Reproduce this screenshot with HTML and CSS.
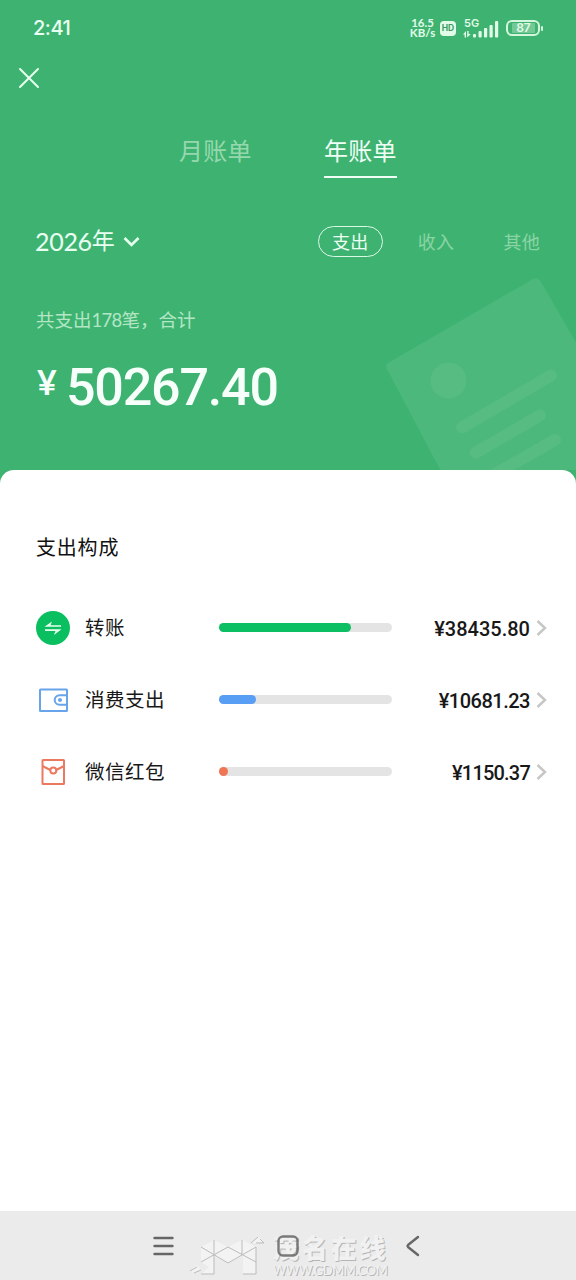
FILE: index.html
```html
<!DOCTYPE html>
<html lang="zh-CN">
<head>
<meta charset="utf-8">
<title>年账单</title>
<link rel="stylesheet" href="styles.css">
</head>
<body>
<div class="screen">
  <header class="hero">
    <svg class="receipt" width="206" height="210" viewBox="370 260 206 210">
      <path d="M388 363 L533 279 Q538 277 541 282 L640 453 L480 545 L387 369 Q385 365 388 363Z" fill="#fff" fill-opacity=".075"/>
      <circle cx="448.500" cy="380.500" r="18" fill="#fff" fill-opacity=".06"/>
      <g stroke="#fff" stroke-opacity=".06" stroke-width="12" stroke-linecap="round">
        <path d="M462 427.500 L551 375.500"/><path d="M476 452.500 L540 415.500"/><path d="M472 487 L555 440"/>
      </g>
    </svg>
    <div class="status">
      <span class="clock">2:41</span>
      <div class="status-icons">
        <div class="speed"><span>16.5</span><span>KB/s</span></div>
        <span class="hd">HD</span>
        <div class="signal">
          <span class="net">5G</span>
          <svg width="36" height="19" viewBox="0 0 36 19" fill="#e2fbe9">
            <path d="M0 15.500 L3 12 V18.500 H1.600 V15.500Z M4.200 12 H5.600 V15 H7.800 L4.200 18.500Z"/>
            <rect x="10" y="15" width="3" height="3.500" rx="1"/><rect x="15.500" y="12" width="3.200" height="6.500" rx="1"/><rect x="21" y="9" width="3.200" height="9.500" rx="1"/><rect x="26.500" y="6" width="3.200" height="12.500" rx="1"/><rect x="32" y="2" width="3.200" height="16.500" rx="1"/>
          </svg>
        </div>
        <div class="battery"><span class="level">87</span></div>
        <span class="battery-tip"></span>
      </div>
    </div>
    <div class="nav">
      <svg width="22" height="22" viewBox="0 0 22 22" fill="none" stroke="#e8fff0" stroke-width="2" stroke-linecap="round"><path d="M2 2 L20 20 M20 2 L2 20"/></svg>
    </div>
    <div class="tabs"><span class="tab">月账单</span><span class="tab active">年账单</span></div>
    <div class="filters">
      <div class="year"><span class="year-num">2026</span><span class="year-unit">年</span>
        <svg width="17" height="12" viewBox="0 0 17 12" fill="none" stroke="#e8fff0" stroke-width="2.600"><path d="M1.500 2 L8.500 9 L15.500 2"/></svg>
      </div>
      <div class="kinds"><span class="kind chosen">支出</span><span class="kind">收入</span><span class="kind">其他</span></div>
    </div>
    <p class="summary">共支出<span class="count">178</span>笔，合计</p>
    <div class="total"><span class="yen">¥</span><span class="sum">50267.40</span></div>
  </header>
  <main class="card">
    <h2 class="title">支出构成</h2>
    <div class="row">
      <div class="icon"><svg width="36" height="36" viewBox="0 0 36 36"><circle cx="18" cy="18" r="17" fill="#0abf60"/><path d="M9.500 16.800 L17 11.500 L15.500 15.200 H26 V16.800Z M26.500 19.300 H10 V21 H20.500 L19 25Z" fill="#e8fff0"/></svg></div>
      <span class="name">转账</span>
      <div class="bar"><div class="fill green" style="width:132.500px"></div></div>
      <span class="amount">¥38435.80</span>
      <svg class="chevron" width="11" height="18" viewBox="0 0 11 18"><path d="M1.500 2 L9 9 L1.500 16"/></svg>
    </div>
    <div class="row">
      <div class="icon"><svg width="36" height="36" viewBox="0 0 36 36" fill="none" stroke="#67a4e9" stroke-width="2"><rect x="5" y="7.500" width="27" height="21.500" rx=".5"/><path d="M32 13.200 H24.500 A4.700 4.700 0 0 0 24.500 22.800 H32"/><circle cx="25" cy="18" r="2" fill="#67a4e9" stroke="none"/></svg></div>
      <span class="name">消费支出</span>
      <div class="bar"><div class="fill blue" style="width:37px"></div></div>
      <span class="amount medium">¥10681.23</span>
      <svg class="chevron" width="11" height="18" viewBox="0 0 11 18"><path d="M1.500 2 L9 9 L1.500 16"/></svg>
    </div>
    <div class="row">
      <div class="icon"><svg width="36" height="36" viewBox="0 0 36 36" fill="none" stroke="#eb7960" stroke-width="2"><rect x="7.500" y="6" width="21.500" height="24" rx=".5"/><path d="M7.500 12 L15.300 16 M21.200 16 L29 12"/><circle cx="18.300" cy="16.500" r="3"/></svg></div>
      <span class="name">微信红包</span>
      <div class="bar"><div class="fill orange" style="width:9.500px"></div></div>
      <span class="amount small">¥1150.37</span>
      <svg class="chevron" width="11" height="18" viewBox="0 0 11 18"><path d="M1.500 2 L9 9 L1.500 16"/></svg>
    </div>
  </main>
  <footer class="keys">
    <svg width="21" height="22" viewBox="0 0 21 22" stroke="#666" stroke-width="2.400" stroke-linecap="round"><path d="M1.500 3 H19.500 M1.500 11 H19.500 M1.500 19 H19.500"/></svg>
    <svg class="home" width="22" height="22" viewBox="0 0 22 22" fill="none" stroke="#666" stroke-width="2.400"><rect x="1.500" y="1.500" width="19" height="19" rx="4.500"/></svg>
    <svg width="15" height="22" viewBox="0 0 15 22" fill="none" stroke="#666" stroke-width="2.400" stroke-linecap="round" stroke-linejoin="round"><path d="M13 2 L3 10 Q2 11 3 12 L13 20"/></svg>
    <div class="watermark">
      <svg width="78" height="40" viewBox="0 0 78 40">
        <path d="M11 10 L24 3 L38 10 L52 3 L66 10 V37 H53 V19 L38 26 L24 19 V37 H11 L19 30 L11 25Z" fill="#f4f4f4"/>
        <path d="M61 6 L68 0 L74 4 L67 6Z M0 34 L7 28 L11 33 L4 36Z" fill="#f4f4f4"/>
        <path d="M11 10 L38 26 L66 10 M11 25 L38 10 L66 25 M24 3 V37 H11 M52 3 V18 M66 10 V37 H53 M61 6 L68 0 M66 6 H74 L70 2 M0 34 L7 30 M4 36 L11 33" fill="none" stroke="#b7b7b7" stroke-width="1"/>
      </svg>
      <div class="brand"><span class="brand-name">茂名在线</span><span class="brand-url">WWW.GDMM.COM</span></div>
    </div>
  </footer>
</div>
</body>
</html>
```

FILE: styles.css
```css
* { box-sizing: border-box; }
body { margin: 0; font-family: "Lato", "Noto Sans CJK SC", sans-serif; }
.screen { width: 576px; height: 1280px; display: flex; flex-direction: column; background: #fff; overflow: hidden; }
svg { display: block; flex: none; }
.hero { position: relative; height: 484px; flex: none; background: #3eb371; color: #e9fff1; }
.receipt { position: absolute; right: 0; top: 260px; }
.status { height: 56px; padding: 0 33px 0 33px; display: flex; justify-content: space-between; align-items: center; }
.clock { font: 500 20px/24px "Inter", sans-serif; letter-spacing: -.5px; }
.status-icons { display: flex; align-items: center; color: #e2fbe9; font-family: "Inter", sans-serif; }
.speed { width: 27px; margin-right: 4px; display: flex; flex-direction: column; align-items: center; font-family: "Lato", sans-serif; font-size: 11.500px; font-weight: 700; line-height: 10.500px; white-space: nowrap; }
.hd { width: 16px; height: 15px; margin-right: 7px; border-radius: 4px; background: #e2fbe9; color: #379c62; font-size: 8.500px; font-weight: 700; line-height: 15px; text-align: center; }
.signal { position: relative; width: 36px; height: 19px; margin-right: 7px; }
.net { position: absolute; left: 1px; top: -1px; font-size: 11px; line-height: 11px; font-weight: 600; }
.battery { width: 34px; height: 16px; padding: 2px 3px; border: 2px solid #d4f6dd; border-radius: 6px; display: flex; align-items: center; }
.level { width: 23px; margin-left: 1px; height: 10px; background: #73c995; font-size: 12px; font-weight: 600; line-height: 10px; text-align: center; border-radius: 1px; }
.battery-tip { width: 2px; height: 5px; margin-left: 1px; border-radius: 1px; background: #d4f6dd; }
.nav { height: 44px; padding: 11px 18px; }
.tabs { height: 78px; padding-left: 179px; display: flex; gap: 72px; }
.tab { width: 73px; padding-top: 33px; font-size: 24px; line-height: 35px; letter-spacing: .2px; color: #96d8ad; white-space: nowrap; }
.tab.active { color: #effff5; border-bottom: 2px solid #effff5; }
.filters { height: 127px; padding: 0 36px 0 35px; display: flex; justify-content: space-between; align-items: center; }
.year { display: flex; align-items: center; font-size: 23px; line-height: 34px; }
.year-num { padding-bottom: 1px; font-size: 25px; letter-spacing: -.3px; }
.year-unit { padding-bottom: 3px; }
.year svg { margin-left: 8px; }
.kinds { display: flex; align-items: center; gap: 34px; }
.kind { font-size: 18px; line-height: 30px; letter-spacing: .3px; color: #8bd4a5; }
.kind:last-child { margin-left: 15px; }
.chosen { width: 65px; height: 31px; margin-right: 1px; border: 1.500px solid #d9f9e4; border-radius: 16px; line-height: 30px; text-align: center; color: #edfff3; }
.summary { margin: 0; padding-left: 36px; font-size: 18.500px; line-height: 30px; color: #b4e6c5; }
.count { letter-spacing: -.7px; }
.total { padding: 17px 0 0 37px; display: flex; align-items: flex-start; font-weight: 700; color: #f6fffa; }
.yen { width: 29px; font-size: 34px; line-height: 60px; }
.sum { padding-top: 2px; font: 500 52px/68px "Roboto", sans-serif; letter-spacing: -1.200px; }
.card { position: relative; flex: 1; margin-top: -14px; padding: 62px 29px 0 36px; border-radius: 14px 14px 0 0; background: #fff; color: #181818; }
.title { margin: 0 0 45px; font-size: 20px; line-height: 30px; font-weight: 400; letter-spacing: .8px; color: #111; }
.row { height: 72px; margin-top: -15px; margin-bottom: 15px; display: flex; align-items: center; }
.icon { width: 50px; margin-left: -1px; }
.name { width: 133.500px; font-size: 19.500px; line-height: 30px; letter-spacing: .5px; white-space: nowrap; }
.bar { width: 173px; height: 9px; margin-bottom: 1px; border-radius: 5px; background: #e4e4e4; }
.fill { height: 9px; border-radius: 5px; }
.green { background: #0cbf62; }
.blue { background: #589ef5; }
.orange { background: #ef7655; }
.amount { flex: 1; padding-top: 1px; text-align: right; font: 500 20px/30px "Roboto", sans-serif; }
.amount.medium { letter-spacing: -.5px; }
.amount.small { letter-spacing: -.8px; }
.chevron { margin-left: 6px; fill: none; stroke: #c6c6c6; stroke-width: 2.400; }
.keys { position: relative; height: 69px; flex: none; padding: 0 156px 0 153px; display: flex; justify-content: space-between; align-items: center; background: #ebebeb; }
.keys > svg { position: relative; z-index: 1; }
.home { margin-right: 4px; opacity: .85; }
.watermark { position: absolute; left: 190px; top: 26px; display: flex; opacity: .9; }
.brand { margin-left: 5px; display: flex; flex-direction: column; color: #f2f2f2; white-space: nowrap; text-shadow: 1px 1px 0 #b0b0b0; }
.brand-name { font-size: 26px; line-height: 23px; font-weight: 900; letter-spacing: 2.800px; }
.brand-url { padding-top: 3px; font-size: 13px; line-height: 15px; letter-spacing: -.45px; }
```
